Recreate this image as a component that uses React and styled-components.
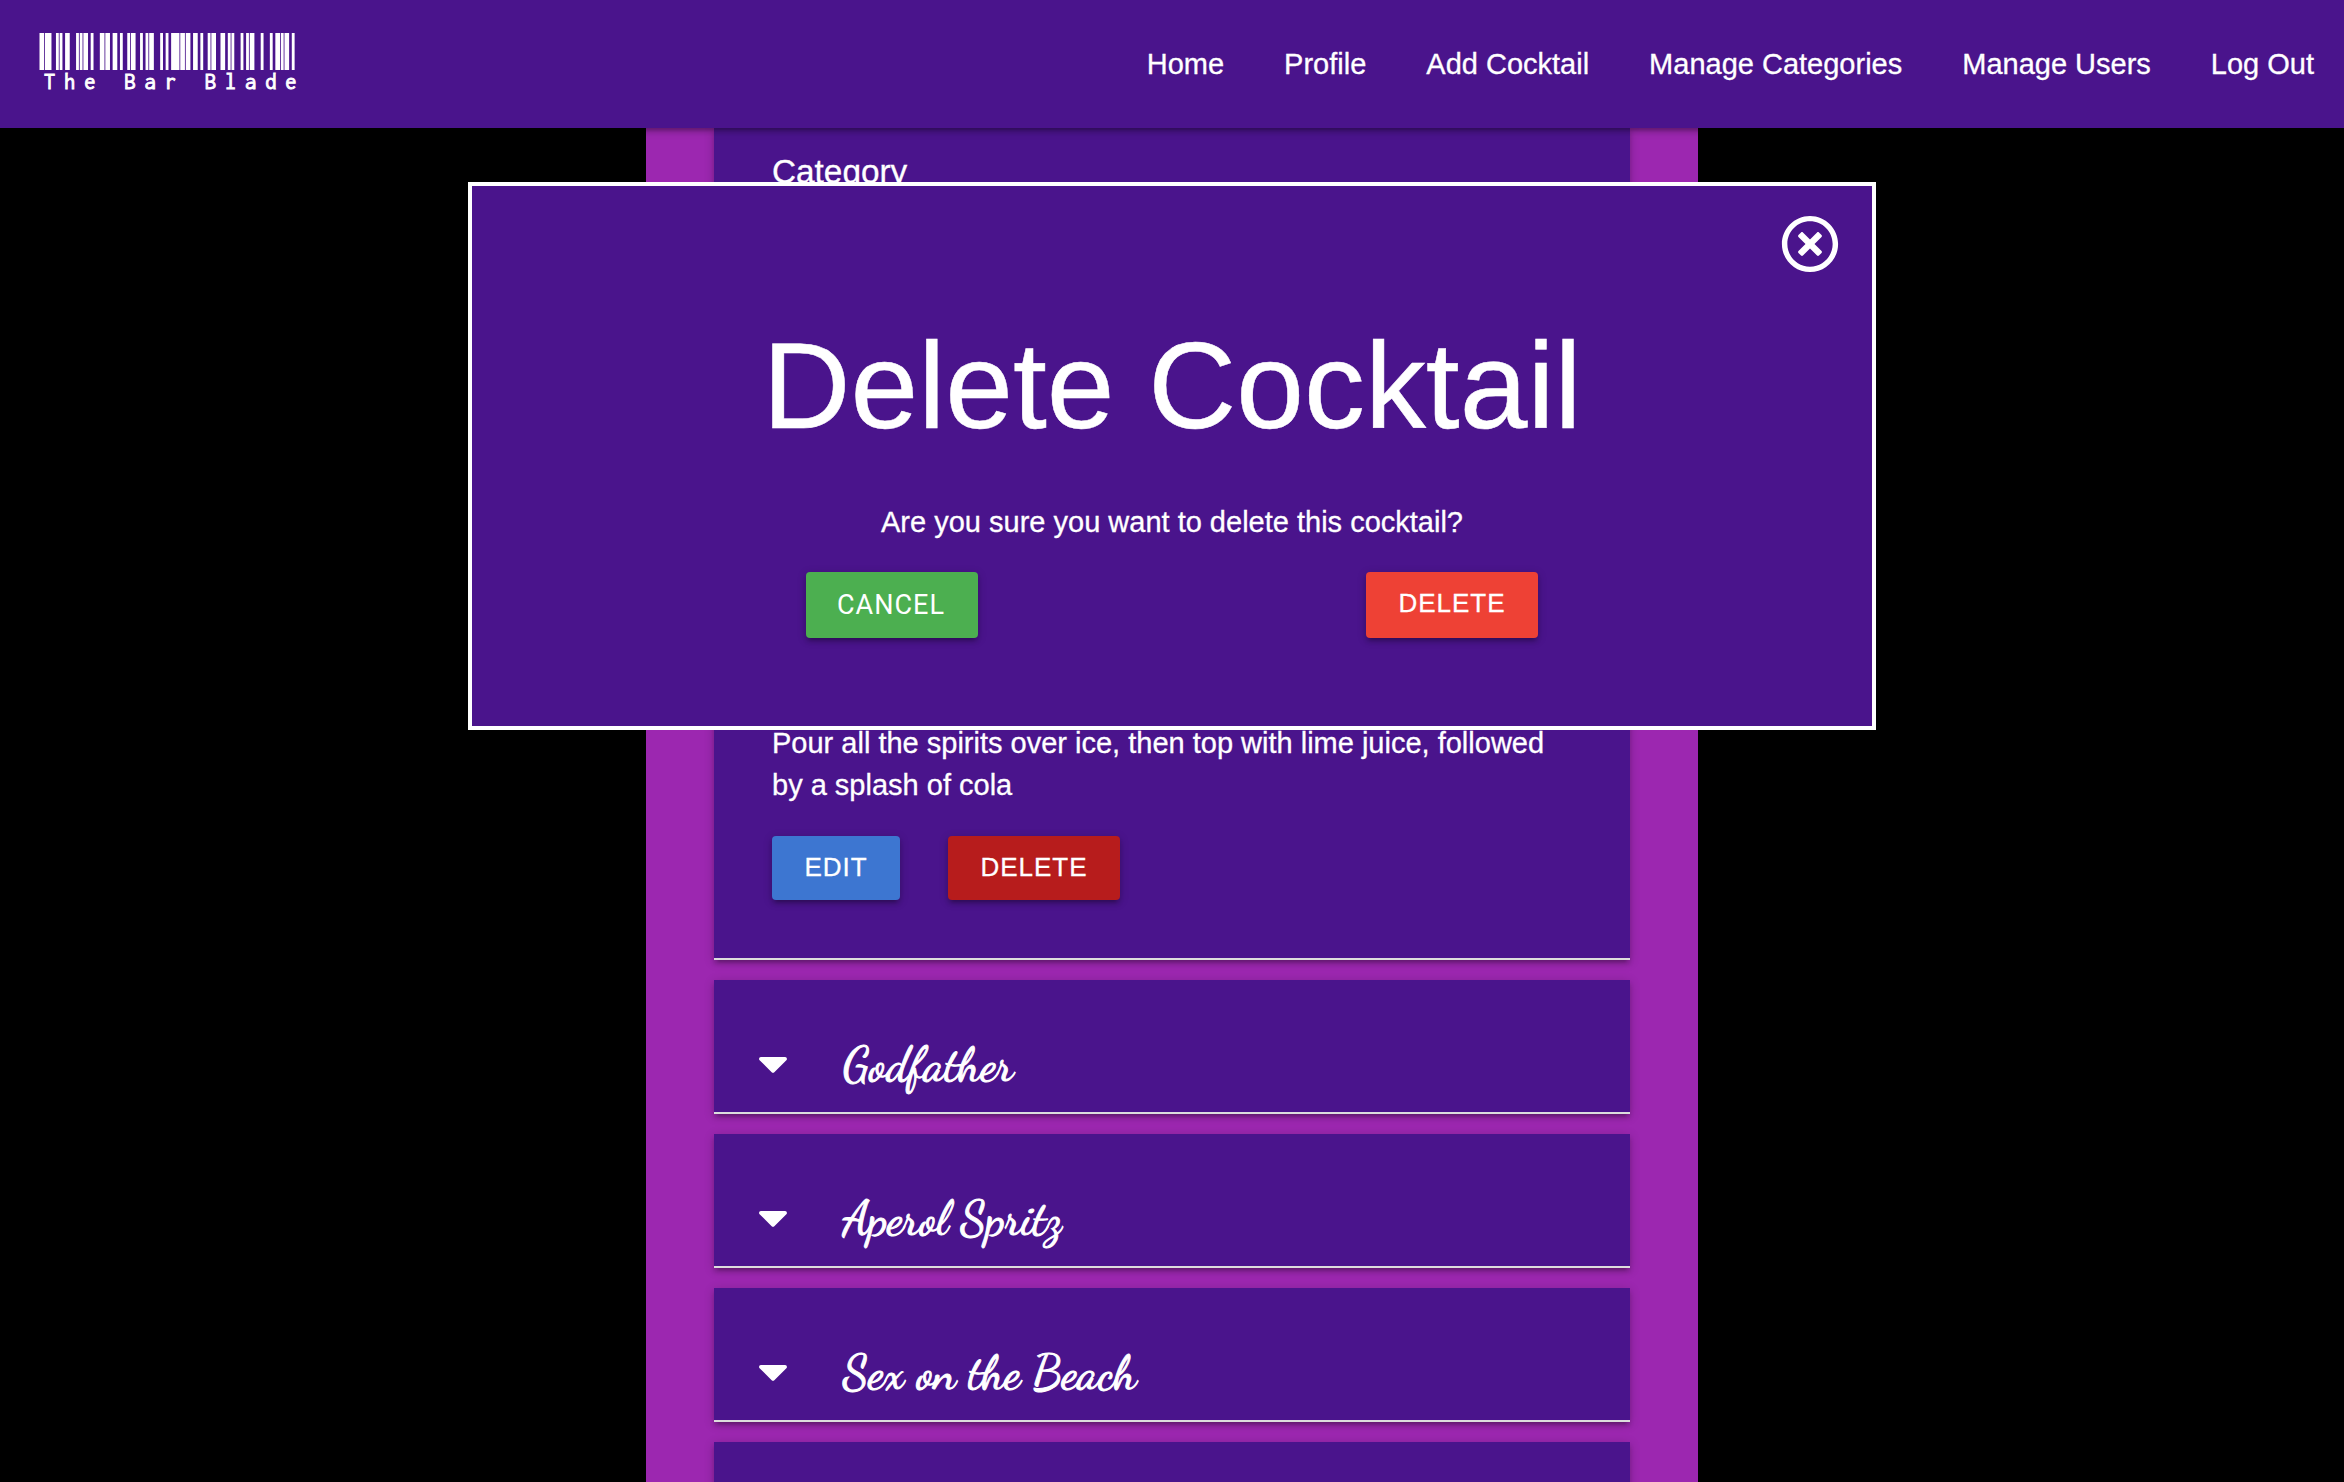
import React from "react";
import styled, { createGlobalStyle, css } from "styled-components";
import { FaCaretDown, FaRegTimesCircle } from "react-icons/fa";

const PURPLE = "#9c27b0";
const DEEP = "#4a148c";

const depth = css`
  box-shadow: 0 4px 4px rgba(0, 0, 0, 0.14), 0 6px 2px -4px rgba(0, 0, 0, 0.12),
    0 2px 10px rgba(0, 0, 0, 0.2);
`;

const GlobalStyle = createGlobalStyle`
  * { box-sizing: border-box; }
  body {
    margin: 0;
    background: #000;
    color: #fff;
    font: 29px/42px Arial, "Liberation Sans", sans-serif;
    overflow: hidden;
  }
`;

const Page = styled.div`
  position: relative;
  height: 1482px;
  overflow: hidden;
  display: flex;
  flex-direction: column;
`;

const Nav = styled.nav`
  position: relative;
  z-index: 1;
  flex: none;
  height: 128px;
  display: flex;
  justify-content: space-between;
  background: ${DEEP};
  -webkit-text-stroke: 0.3px #fff;
  ${depth}
`;

const Brand = styled.a`
  padding: 33px 0 0 38px;
  display: flex;
  flex-direction: column;

  svg { display: block; }
`;

const BrandText = styled.span`
  padding-left: 2px;
  margin-top: 2px;
  font: 22.5px/20px "Inconsolata", monospace;
  letter-spacing: 8.86px;
  text-indent: 4px;
  white-space: pre;
  -webkit-text-stroke: 0.9px #fff;
`;

const Links = styled.div`
  display: flex;
`;

const NavLink = styled.a`
  padding: 0 30px;
  line-height: 128px;
  white-space: nowrap;
`;

const Main = styled.main`
  flex: none;
  align-self: center;
  width: 1052px;
  height: 1354px;
  padding: 0 68px;
  overflow: hidden;
  display: flex;
  flex-direction: column;
  gap: 20px;
  background: ${PURPLE};
`;

const Card = styled.section`
  flex: none;
  background: ${DEEP};
  border-bottom: 2px solid #ddd;
  ${depth}
`;

const OpenCard = styled(Card)`
  height: 832px;
  padding: 22px 58px 58px;
  display: flex;
  flex-direction: column;
  justify-content: space-between;
`;

const FieldName = styled.h5`
  margin: 0;
  font-size: 33.35px;
  font-weight: 400;
  line-height: 44px;
  -webkit-text-stroke: 0.3px #fff;
`;

const Method = styled.p`
  margin: 0 0 30px;
  -webkit-text-stroke: 0.3px #fff;
`;

const Row = styled(Card)`
  height: 134px;
  padding: 0 0 0 44px;
  display: flex;
  align-items: flex-start;

  svg {
    flex: none;
    width: 30px;
    height: 48px;
    margin-top: 59px;
  }
`;

const CocktailName = styled.span`
  margin: 57px 0 0 55px;
  font: 47.6px/56px "Dancing Script", "Liberation Serif", cursive;
  -webkit-text-stroke: 1px #fff;
`;

const Actions = styled.div`
  display: flex;
  gap: ${(p) => p.$gap};
`;

const Button = styled.button`
  height: ${(p) => p.$height || "64px"};
  padding: 0;
  border: 0;
  border-radius: 4px;
  background: ${(p) => p.$color};
  color: #fff;
  font: 26px/${(p) => p.$line || "62px"} Arial, "Liberation Sans", sans-serif;
  letter-spacing: 1px;
  display: flex;
  justify-content: center;
  width: ${(p) => p.$width};
  -webkit-text-stroke: 0.3px #fff;
  ${depth}
`;

const CancelButton = styled(Button)`
  padding-right: 2px;
  font-family: Roboto, sans-serif;
  font-size: 27px;
  -webkit-text-stroke: 0;
`;

const Modal = styled.div`
  position: absolute;
  z-index: 2;
  top: 182px;
  left: 468px;
  width: 1408px;
  height: 548px;
  padding: 29px 0 0;
  border: 4px solid #fff;
  background: ${DEEP};
  display: flex;
  flex-direction: column;
  align-items: center;
`;

const Close = styled.button`
  align-self: flex-end;
  margin-right: 33px;
  padding: 0;
  border: 0;
  background: none;
  color: #fff;
  font-size: 58px;
  line-height: 0;
`;

const Title = styled.h1`
  margin: 46px 0 48px;
  font-size: 121.8px;
  font-weight: 400;
  line-height: 134px;
  -webkit-text-stroke: 0.5px #fff;
`;

const Question = styled.p`
  margin: 0 0 29px;
  -webkit-text-stroke: 0.3px #fff;
`;

const BARS = {
  T: "213311", h: "122411", e: "112214", " ": "212222", B: "131123", a: "121124",
  r: "121241", l: "221114", d: "141221",
};

function Barcode({ text }) {
  const unit = 20.11 / 11;
  const bars = [];
  let x = 2;
  for (const ch of text) {
    [...BARS[ch]].forEach((w, i) => {
      const width = Number(w) * unit;
      if (i % 2 === 0) bars.push({ x: x - 0.5, width: width + 1 });
      x += width;
    });
  }
  return (
    <svg width="264" height="37" fill="#fff" aria-hidden="true">
      {bars.map((b, i) => (
        <rect key={i} x={b.x} y="0" width={b.width} height="37" />
      ))}
    </svg>
  );
}

const links = ["Home", "Profile", "Add Cocktail", "Manage Categories", "Manage Users", "Log Out"];
const cocktails = ["Godfather", "Aperol Spritz", "Sex on the Beach"];

export default function App() {
  return (
    <Page>
      <GlobalStyle />
      <Nav>
        <Brand>
          <Barcode text="The Bar Blade" />
          <BrandText>The Bar Blade</BrandText>
        </Brand>
        <Links>
          {links.map((l) => (
            <NavLink key={l}>{l}</NavLink>
          ))}
        </Links>
      </Nav>
      <Main>
        <OpenCard>
          <FieldName>Category</FieldName>
          <div>
            <Method>
              Pour all the spirits over ice, then top with lime juice, followed by a splash of cola
            </Method>
            <Actions $gap="48px">
              <Button $color="#3d76d1" $width="128px">EDIT</Button>
              <Button $color="#b71c1c" $width="172px">DELETE</Button>
            </Actions>
          </div>
        </OpenCard>
        {cocktails.map((c) => (
          <Row key={c}>
            <FaCaretDown />
            <CocktailName>{c}</CocktailName>
          </Row>
        ))}
        <Row />
      </Main>
      <Modal>
        <Close aria-label="Close">
          <FaRegTimesCircle />
        </Close>
        <Title>Delete Cocktail</Title>
        <Question>Are you sure you want to delete this cocktail?</Question>
        <Actions $gap="388px">
          <CancelButton $color="#4caf50" $width="172px" $height="66px" $line="66px">
            CANCEL
          </CancelButton>
          <Button $color="#ee4135" $width="172px" $height="66px">DELETE</Button>
        </Actions>
      </Modal>
    </Page>
  );
}
